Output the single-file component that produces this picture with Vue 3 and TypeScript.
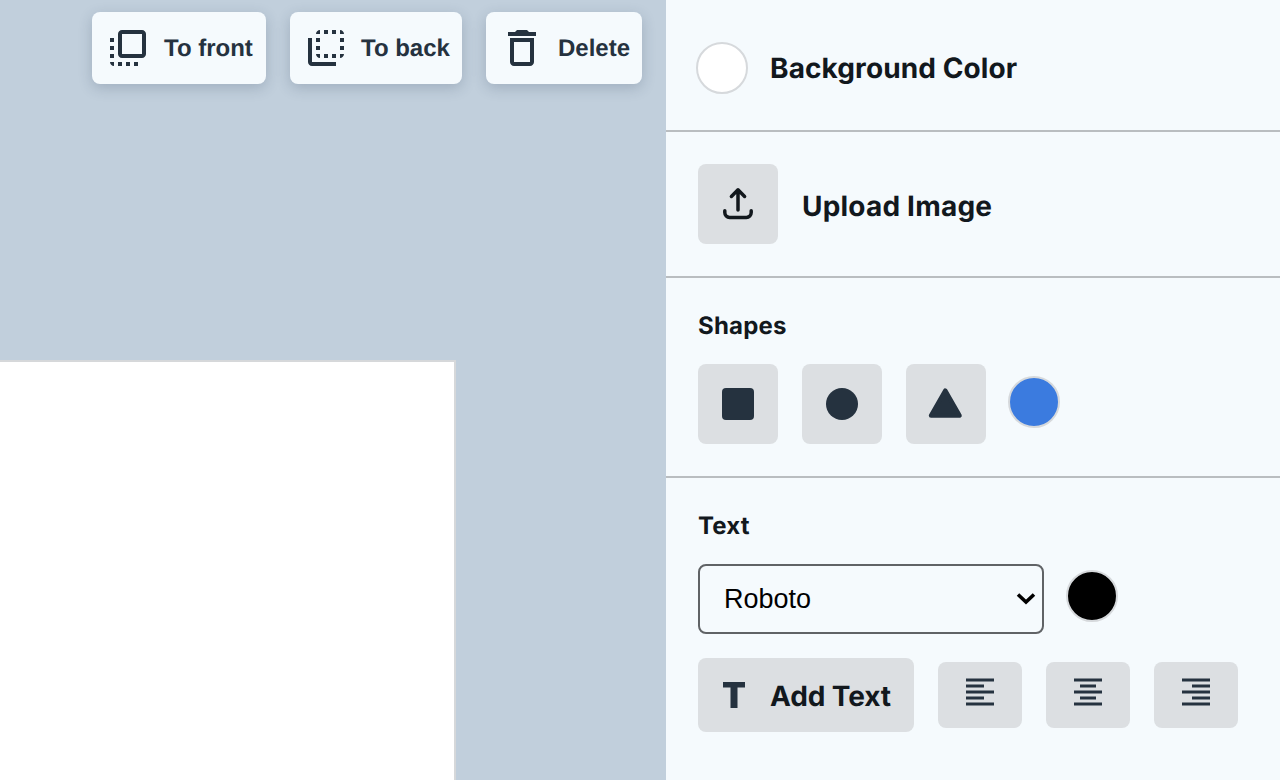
<script setup lang="ts">
import { ref } from 'vue'

interface ToolAction {
  label: string
  path: string
}

const toolbar: ToolAction[] = [
  {
    label: 'To front',
    path: 'M3 13h2v-2H3v2zm0 4h2v-2H3v2zm2 4v-2H3c0 1.1.89 2 2 2zM3 9h2V7H3v2zm12 12h2v-2h-2v2zm4-18H9c-1.11 0-2 .9-2 2v10c0 1.1.89 2 2 2h10c1.1 0 2-.9 2-2V5c0-1.1-.9-2-2-2zm0 12H9V5h10v10zm-8 6h2v-2h-2v2zm-4 0h2v-2H7v2z'
  },
  {
    label: 'To back',
    path: 'M9 7H7v2h2V7zm0 4H7v2h2v-2zm0-8c-1.11 0-2 .9-2 2h2V3zm4 12h-2v2h2v-2zm6-12v2h2c0-1.1-.9-2-2-2zm-6 0h-2v2h2V3zM9 17v-2H7c0 1.1.89 2 2 2zm10-4h2v-2h-2v2zm0-4h2V7h-2v2zm0 8c1.1 0 2-.9 2-2h-2v2zM5 7H3v12c0 1.1.89 2 2 2h12v-2H5V7zm10-2h2V3h-2v2zm0 12h2v-2h-2v2z'
  },
  {
    label: 'Delete',
    path: 'M6 19c0 1.1.9 2 2 2h8c1.1 0 2-.9 2-2V7H6v12zM8 9h8v10H8V9zm7.5-5l-1-1h-5l-1 1H5v2h14V4z'
  }
]

// x offset and width of each line in the 28px align icons
const aligns: { name: string; short: number }[] = [
  { name: 'left', short: 0 },
  { name: 'center', short: 6 },
  { name: 'right', short: 10 }
]
const lineTops = [0.5, 6.5, 12.5, 18.5, 24.5]
const shortWidth = (name: string) => (name === 'center' ? 16 : 18)

const font = ref('Roboto')
const fonts = ['Roboto', 'Lato', 'Inter', 'Open Sans']
</script>

<template>
  <div class="editor">
    <main class="stage">
      <div class="toolbar">
        <button v-for="item in toolbar" :key="item.label" class="tool-btn">
          <svg class="icon48" viewBox="0 0 24 24" fill="currentColor">
            <path :d="item.path" />
          </svg>
          <span>{{ item.label }}</span>
        </button>
      </div>
      <div class="page"></div>
    </main>

    <aside class="panel">
      <section class="section bg-section">
        <span class="swatch swatch-white"></span>
        <span class="big-label">Background Color</span>
      </section>

      <section class="section upload-section">
        <button class="square-btn">
          <svg class="icon48" viewBox="0 0 24 24" fill="none" stroke="currentColor" stroke-width="1.75" stroke-linecap="round" stroke-linejoin="round">
            <path d="M5.4 15.4v.9a2.4 2.4 0 0 0 2.4 2.4h8.4a2.4 2.4 0 0 0 2.4-2.4v-.9" />
            <path d="M12 15V4.9M8.7 8.2 12 4.9l3.3 3.3" />
          </svg>
        </button>
        <span class="big-label">Upload Image</span>
      </section>

      <section class="section">
        <h3 class="heading">Shapes</h3>
        <div class="row">
          <button class="square-btn">
            <svg class="icon48" viewBox="0 0 24 24" fill="currentColor"><rect x="4" y="4" width="16" height="16" rx="2" /></svg>
          </button>
          <button class="square-btn">
            <svg class="icon48" viewBox="0 0 24 24" fill="currentColor"><circle cx="12" cy="12" r="8" /></svg>
          </button>
          <button class="square-btn">
            <svg class="icon48" viewBox="0 0 24 24" fill="currentColor" stroke="currentColor" stroke-width="2.2" stroke-linejoin="round">
              <polygon points="11.65,5.3 18.8,17.8 4.5,17.8" />
            </svg>
          </button>
          <span class="swatch swatch-blue"></span>
        </div>
      </section>

      <section class="section text-section">
        <h3 class="heading">Text</h3>
        <div class="row font-row">
          <div class="select-wrap">
            <select v-model="font" class="font-select">
              <option v-for="f in fonts" :key="f">{{ f }}</option>
            </select>
            <svg class="chevron" viewBox="0 0 20 13" fill="none" stroke="#000" stroke-width="3.6">
              <path d="M2 2.5 10 10 18 2.5" />
            </svg>
          </div>
          <span class="swatch swatch-black"></span>
        </div>
        <div class="row text-row">
          <button class="add-text">
            <svg class="t-icon" viewBox="0 0 22 26" fill="currentColor"><path d="M0 0h22v5.5h-7.5V26h-7V5.5H0z" /></svg>
            <span>Add Text</span>
          </button>
          <button v-for="a in aligns" :key="a.name" class="align-btn">
            <svg class="align-icon" viewBox="0 0 28 28" fill="currentColor">
              <rect
                v-for="(top, i) in lineTops"
                :key="top"
                :x="i % 2 ? a.short : 0"
                :y="top"
                :width="i % 2 ? shortWidth(a.name) : 28"
                height="3"
              />
            </svg>
          </button>
        </div>
      </section>
    </aside>
  </div>
</template>

<style>
html,
body {
  margin: 0;
  overflow: hidden;
}
</style>

<style scoped>
.editor {
  display: flex;
  width: 1280px;
  height: 780px;
  overflow: hidden;
  font-family: Inter, "Liberation Sans", sans-serif;
  color: #12181d;
  text-rendering: geometricPrecision;
}

button {
  border: none;
  padding: 0;
  font-family: inherit;
  text-rendering: inherit;
  cursor: pointer;
}

.icon48 {
  display: block;
  width: 48px;
  height: 48px;
}

/* Canvas side */
.stage {
  width: 666px;
  flex-shrink: 0;
  background: #c1cfdc;
  display: flex;
  flex-direction: column;
}

.toolbar {
  display: flex;
  justify-content: flex-end;
  gap: 24px;
  padding: 12px 24px 0 0;
  height: 360px;
  flex-shrink: 0;
  box-sizing: border-box;
}

.tool-btn {
  display: flex;
  align-items: center;
  gap: 12px;
  width: 174px;
  height: 72px;
  padding: 0 0 0 12px;
  background: #f5fafd;
  border-radius: 8px;
  box-shadow: 0 4px 14px rgba(40, 60, 85, 0.22);
  color: #25323f;
  font-family: "Liberation Sans", Arial, sans-serif;
  font-size: 24px;
  font-weight: 700;
  white-space: nowrap;
}

.tool-btn:nth-child(2) {
  width: 172px;
  gap: 11px;
}

.tool-btn:nth-child(3) {
  width: 156px;
}

.tool-btn span {
  padding-top: 2px;
}

.page {
  width: 456px;
  flex: 1;
  box-sizing: border-box;
  background: #fff;
  border-top: 2px solid #d6d8da;
  border-right: 2px solid #d6d8da;
}

/* Side panel */
.panel {
  flex: 1;
  background: #f5fafd;
}

.section {
  padding: 32px;
  border-bottom: 2px solid #b9bdc0;
}

.section:last-child {
  border-bottom: none;
}

.bg-section {
  display: flex;
  align-items: center;
  gap: 22px;
  height: 132px;
  box-sizing: border-box;
  padding: 6px 30px 0;
}

.upload-section {
  display: flex;
  align-items: center;
  gap: 24px;
}

.big-label {
  font-size: 28px;
  font-weight: 700;
  letter-spacing: 0.1px;
}

.upload-section .big-label {
  margin-top: 4px;
  letter-spacing: 0.2px;
}

.heading {
  margin: 0 0 24px;
  padding-top: 1px;
  height: 29px;
  font-size: 24px;
  line-height: 30px;
  font-weight: 700;
  letter-spacing: 0.2px;
}

.row {
  display: flex;
  align-items: flex-start;
}

.square-btn {
  display: flex;
  align-items: center;
  justify-content: center;
  width: 80px;
  height: 80px;
  margin-right: 24px;
  background: #dcdfe2;
  border-radius: 8px;
  color: #25323f;
}

.upload-section .square-btn {
  margin-right: 0;
  color: #12181d;
}

.swatch {
  display: block;
  width: 52px;
  height: 52px;
  flex-shrink: 0;
  box-sizing: border-box;
  border: 2px solid #d6d9dc;
  border-radius: 50%;
}

.swatch-white {
  background: #fff;
}

.swatch-blue {
  background: #3b7bdf;
  margin: 12px 0 0 -2px;
}

.swatch-black {
  background: #000;
  margin: 6px 0 0 22px;
}

.select-wrap {
  position: relative;
  width: 346px;
  height: 70px;
}

.font-select {
  appearance: none;
  display: block;
  width: 100%;
  height: 100%;
  box-sizing: border-box;
  padding: 0 24px;
  background: transparent;
  border: 2px solid #606366;
  border-radius: 8px;
  font-family: "Liberation Sans", Arial, sans-serif;
  font-size: 27px;
  color: #000;
}

.chevron {
  position: absolute;
  top: 28px;
  right: 8px;
  width: 20px;
  height: 13px;
  pointer-events: none;
}

.text-row {
  margin-top: 24px;
  gap: 24px;
}

.add-text {
  display: flex;
  align-items: center;
  gap: 25px;
  width: 216px;
  height: 74px;
  padding-left: 25px;
  box-sizing: border-box;
  background: #dcdfe2;
  border-radius: 8px;
  color: #12181d;
  font-size: 28px;
  font-weight: 700;
  letter-spacing: -0.1px;
}

.add-text span {
  margin-top: 2px;
}

.t-icon {
  display: block;
  width: 22px;
  height: 26px;
  color: #25323f;
}

.align-btn {
  width: 84px;
  height: 66px;
  margin-top: 4px;
  padding: 16px 28px 22px;
  background: #dcdfe2;
  border-radius: 8px;
  color: #25323f;
}

.align-icon {
  display: block;
  width: 28px;
  height: 28px;
}
</style>
